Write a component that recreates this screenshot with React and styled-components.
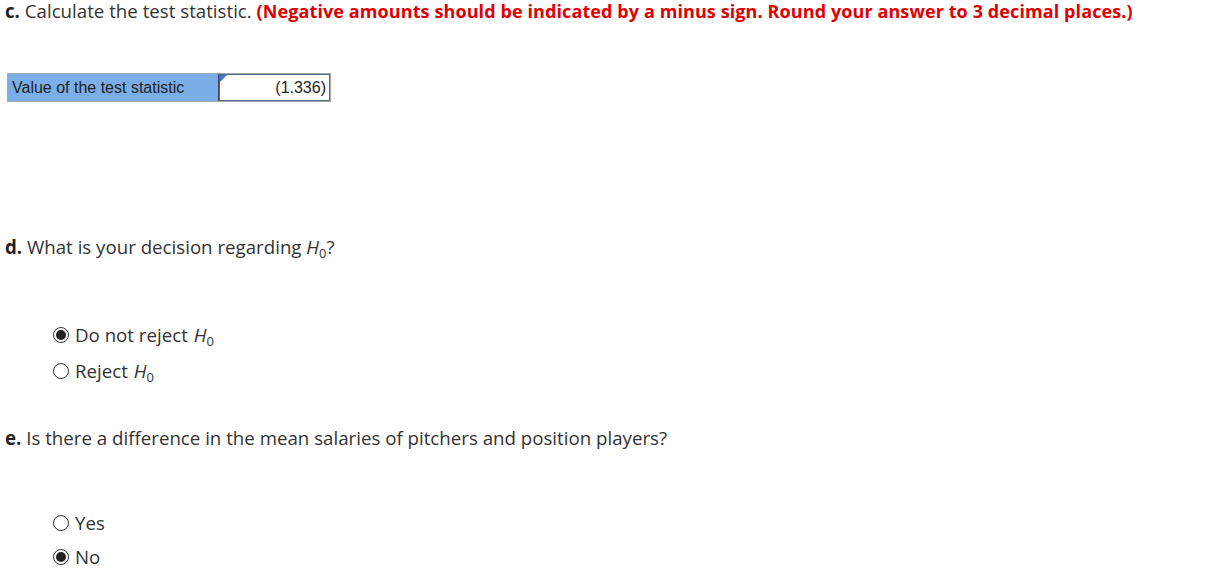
import React from "react";
import styled, { createGlobalStyle } from "styled-components";

const Global = createGlobalStyle`
  body {
    margin: 0;
    background: #fff;
    font-family: "Open Sans", Lato, sans-serif;
    color: #333;
  }
`;

const Page = styled.div`
  padding: 0 0 0 5px;
`;

const Question = styled.p`
  margin: 0;
  font-size: 18.7px;
  line-height: 22px;
  color: #333;
  padding-top: ${(p) => p.$top}px;

  & b {
    color: #222;
  }
`;

const Note = styled.span`
  color: #e00000;
  font-weight: 700;
  font-size: 18px;
  letter-spacing: 0.1px;
`;

const Answer = styled.div`
  display: flex;
  margin: 51px 0 0 2px;
  width: 324px;
  height: 29px;
  border: 1px solid #a7a7a7;
  box-sizing: border-box;
  font-family: "Liberation Sans", Arial, sans-serif;
  font-size: 16px;
`;

const Label = styled.div`
  width: 206px;
  background: #7aaee8;
  border-right: 1px solid #444;
  display: flex;
  align-items: center;
  padding-left: 4px;
  color: #222;
`;

const InputCell = styled.div`
  position: relative;
  flex: 1;
  display: flex;
  align-items: center;
  justify-content: flex-end;
  padding-right: 3px;
  border: 1px solid #4b6a8a;
  color: #222;
`;

const Flag = styled.span`
  position: absolute;
  left: 0;
  top: 0;
  width: 0;
  height: 0;
  border-top: 7px solid #3a7bd5;
  border-right: 7px solid transparent;
`;

const Options = styled.div`
  display: flex;
  flex-direction: column;
  gap: ${(p) => p.$gap}px;
  margin: ${(p) => p.$top}px 0 0 48px;
`;

const Option = styled.label`
  display: flex;
  align-items: center;
  gap: 6px;
  font-size: 18.7px;
  line-height: 22px;
  color: #333;
`;

const Dot = styled.span`
  width: 16px;
  height: 16px;
  border-radius: 50%;
  border: 1px solid #333;
  box-sizing: border-box;
  display: flex;
  align-items: center;
  justify-content: center;

  &::after {
    content: "";
    width: 10px;
    height: 10px;
    border-radius: 50%;
    background: ${(p) => (p.$on ? "#222" : "transparent")};
  }
`;

const Sub = styled.sub`
  font-size: 13px;
  line-height: 0;
  vertical-align: -4px;
  font-style: normal;
`;

const H0 = () => (
  <span>
    <i>H</i>
    <Sub>0</Sub>
  </span>
);

export default function App() {
  return (
    <Page>
      <Global />
      <Question $top={0}>
        <b>c.</b> Calculate the test statistic.{" "}
        <Note>(Negative amounts should be indicated by a minus sign. Round your answer to 3 decimal places.)</Note>
      </Question>
      <Answer>
        <Label>Value of the test statistic</Label>
        <InputCell>
          <Flag />
          (1.336)
        </InputCell>
      </Answer>
      <Question $top={134}>
        <b>d.</b> What is your decision regarding <H0 />?
      </Question>
      <Options $top={66} $gap={14}>
        <Option>
          <Dot $on /> Do not reject <H0 />
        </Option>
        <Option>
          <Dot /> Reject <H0 />
        </Option>
      </Options>
      <Question $top={45}>
        <b>e.</b> Is there a difference in the mean salaries of pitchers and position players?
      </Question>
      <Options $top={63} $gap={12}>
        <Option>
          <Dot /> Yes
        </Option>
        <Option>
          <Dot $on /> No
        </Option>
      </Options>
    </Page>
  );
}
